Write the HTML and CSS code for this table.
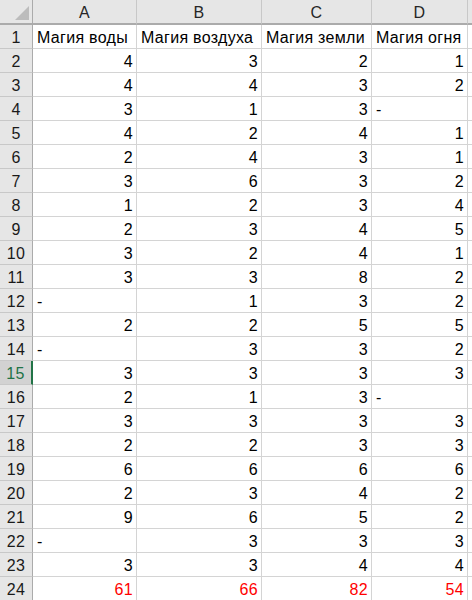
FILE: index.html
```html
<!DOCTYPE html>
<html>
<head>
<meta charset="utf-8">
<link rel="stylesheet" href="styles.css">
</head>
<body>
<div class="sheet" id="sheet">
  <div class="corner"><span class="tri"></span></div>
  <div class="colhdr">A</div>
  <div class="colhdr">B</div>
  <div class="colhdr">C</div>
  <div class="colhdr">D</div>
  <div class="colhdr last"></div>
</div>
<script src="app.js"></script>
</body>
</html>
```
FILE: styles.css
```css
html, body {
  margin: 0;
  padding: 0;
  background: #ffffff;
}
.sheet {
  display: grid;
  grid-template-columns: 33px 104px 125px 110px 96px 1fr;
  grid-auto-rows: 24px;
  grid-template-rows: 25px;
  font-family: "Liberation Sans", Arial, sans-serif;
  font-size: 16px;
  letter-spacing: 0.3px;
  color: #000;
  width: 472px;
  height: 600px;
  overflow: hidden;
}
.sheet > div {
  box-sizing: border-box;
  border-right: 1px solid #d4d4d4;
  border-bottom: 1px solid #d4d4d4;
  white-space: nowrap;
  overflow: hidden;
}
.corner {
  background: #e6e6e6;
  position: relative;
  border-right: 1px solid #ababab !important;
  border-bottom: 2px solid #ababab !important;
}
.tri {
  position: absolute;
  right: 3px;
  bottom: 3px;
  width: 0;
  height: 0;
  border-left: 14px solid transparent;
  border-bottom: 14px solid #bcbcbc;
}
.colhdr {
  background: #e6e6e6;
  border-right: 1px solid #c8c8c8 !important;
  border-bottom: 2px solid #ababab !important;
  text-align: center;
  line-height: 25px;
  color: #262626;
}
.rowhdr {
  background: #e6e6e6;
  border-right: 1px solid #ababab !important;
  border-bottom: 1px solid #c8c8c8 !important;
  text-align: center;
  line-height: 26px;
  color: #1a1a1a;
}
.rowhdr.sel {
  background: #d2d2d2;
  color: #217346;
  border-right: 2px solid #217346 !important;
}
.cell {
  line-height: 26px;
  padding: 0 3px 0 4px;
}
.num {
  text-align: right;
}
.txt {
  text-align: left;
}
.red {
  color: #ff0000;
}
```
FILE: app.js
```js
const data = [
  ["Магия воды","Магия воздуха","Магия земли","Магия огня"],
  [4,3,2,1],[4,4,3,2],[3,1,3,"-"],[4,2,4,1],[2,4,3,1],[3,6,3,2],[1,2,3,4],
  [2,3,4,5],[3,2,4,1],[3,3,8,2],["-",1,3,2],[2,2,5,5],["-",3,3,2],[3,3,3,3],
  [2,1,3,"-"],[3,3,3,3],[2,2,3,3],[6,6,6,6],[2,3,4,2],[9,6,5,2],["-",3,3,3],
  [3,3,4,4],[61,66,82,54]
];
const sheet = document.getElementById("sheet");
data.forEach((row, i) => {
  const h = document.createElement("div");
  h.className = "rowhdr" + (i === 14 ? " sel" : "");
  h.textContent = i + 1;
  sheet.appendChild(h);
  row.forEach(v => {
    const c = document.createElement("div");
    const isNum = typeof v === "number";
    c.className = "cell " + (isNum ? "num" : "txt") + (i === 23 ? " red" : "");
    c.textContent = v;
    sheet.appendChild(c);
  });
  const e = document.createElement("div");
  e.className = "cell";
  sheet.appendChild(e);
});
```
